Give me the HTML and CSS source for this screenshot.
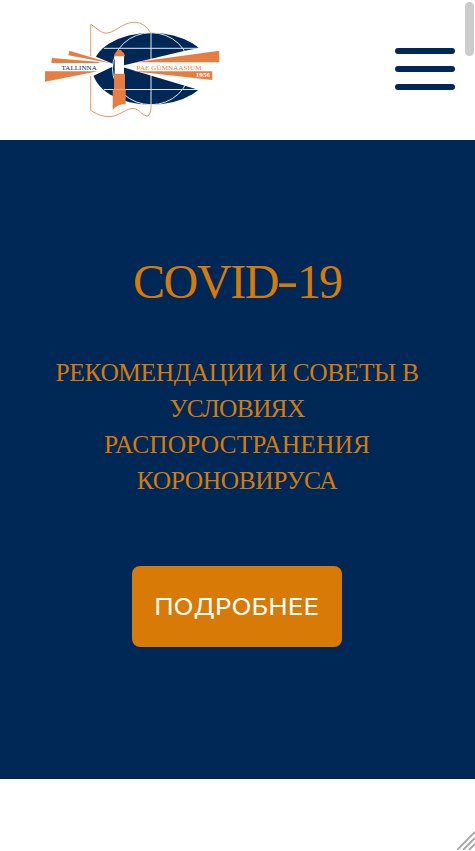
FILE: index.html
```html
<!DOCTYPE html>
<html lang="ru">
<head>
<meta charset="utf-8">
<title>Tallinna Pae Gümnaasium</title>
<link rel="stylesheet" href="styles.css">
</head>
<body>
<header class="header">
  <svg class="logo" viewBox="44 20 177 100" role="img" aria-label="Tallinna Pae Gümnaasium">
    <path class="flag" d="M90.700 110.300V24.300C97 28 101 34 108 33C117 31 123 22.500 134 22.300C142 22 147 27 151 33.500M90.700 110.300C98 115 106 118 114 116C123 113 127 108.500 133 108.500C140 109 141 115 147 116C150 116 151 111 151 104"/>
    <ellipse class="navy" cx="151" cy="68.700" rx="58.500" ry="36"/>
    <path class="grid" d="M151 33V104M104 48.300H199M104 89.500H199"/>
    <ellipse class="grid" cx="151" cy="68.700" rx="38.500" ry="36"/>
    <path class="white" d="M124 65.300L185 50.800L199 48H222V90H199L124 67.500ZM113 63.800L94 56H90V76H93L113 66.500Z"/>
    <path class="orange" d="M135 62.300L219.300 50.700V62.300ZM133 71.300H212.300V80ZM69.300 50.700L112 63.500L68.300 55.300ZM52 58L100 62L98 63H51.300ZM45 71.300H98L45 81.700Z"/>
    <path class="white" d="M114.700 56H124V74H114.700Z"/>
    <path class="orange" d="M113.800 56.300Q115 52 117.500 51V50H121.500V51Q124.500 52.500 125.200 56.300ZM114 73.800H125V89H125.700V104Q117 104 112.700 110V89H114Z"/>
    <path class="seam" d="M112.700 89.500H125.700"/>
    <text class="name navy" x="61.500" y="70.300" textLength="35.300">TALLINNA</text>
    <text class="name orange" x="136.500" y="70.300" textLength="65">PAE GÜMNAASIUM</text>
    <text class="name year" x="195.800" y="77" textLength="14.200">1956</text>
  </svg>
  <div class="burger"><i></i><i></i><i></i></div>
</header>
<main class="hero">
  <h1>COVID<span class="dash">-</span><span class="number">19</span></h1>
  <p class="lead"><span class="l1">РЕКОМЕНДАЦИИ И СОВЕТЫ В</span><span class="l2">УСЛОВИЯХ</span><span class="l3">РАСПОРОСТРАНЕНИЯ</span><span class="l4">КОРОНОВИРУСА</span></p>
  <a class="button"><span>ПОДРОБНЕЕ</span></a>
</main>
<div class="scroll-thumb"></div>
<svg class="resize-grip" viewBox="0 0 18 19"><path d="M0 19L18 1M6 19L18 7M12 19L18 13"/></svg>
</body>
</html>
```
FILE: styles.css
```css
* { box-sizing: border-box; }
body { margin: 0; background: #fff; height: 851px; overflow: hidden; }
.header { height: 140px; padding: 0 20px 0 44px; display: flex; align-items: center; justify-content: space-between; }
.logo { width: 177px; height: 100px; }
.navy { fill: #002857; }
.orange { fill: #e67e42; }
.white { fill: #fff; }
.flag { fill: none; stroke: #e99468; stroke-width: 1; }
.grid { fill: none; stroke: #e4e9ef; stroke-width: 1; }
.seam { stroke: #f3b893; stroke-width: .7; }
.name { font: 7px "Liberation Serif", serif; }
.year { fill: #fff; font-weight: bold; }
.burger { width: 60px; display: grid; gap: 12px; margin-top: -2px; }
.burger i { height: 6px; border-radius: 3px; background: #002857; }
.hero { height: 639px; background: #002857; color: #d77a06; display: flex; flex-direction: column; align-items: center; padding: 108px 1px 0 0; }
h1 { margin: 0; font: 48px/68px "Liberation Serif", serif; letter-spacing: -1.4px; white-space: nowrap; }
.dash { display: inline-block; width: 19px; text-align: center; letter-spacing: 0; transform: translateY(-1px) scaleX(1.35); }
.number { letter-spacing: -2px; }
.lead { margin: 38px 0 0; font: 25.4px/36px "Liberation Serif", serif; text-align: center; white-space: nowrap; }
.lead span { display: block; }
.l1 { letter-spacing: -.35px; }
.l2 { letter-spacing: -.65px; }
.l3 { letter-spacing: .15px; }
.l4 { letter-spacing: -.35px; }
.button { margin-top: 68px; width: 210px; height: 81px; border-radius: 8px; background: #d77a06; color: #fff; font: 400 23.300px/81px Inter, sans-serif; text-align: center; }
.button span { display: inline-block; transform: scaleX(1.12); }
.scroll-thumb { position: absolute; left: 465px; top: 2px; width: 9px; height: 54px; border-radius: 5px; background: #cbcbcb; }
.resize-grip { position: absolute; left: 457px; top: 831px; width: 18px; height: 19px; fill: none; stroke: #a5a5a5; stroke-width: 1.8; }
```
